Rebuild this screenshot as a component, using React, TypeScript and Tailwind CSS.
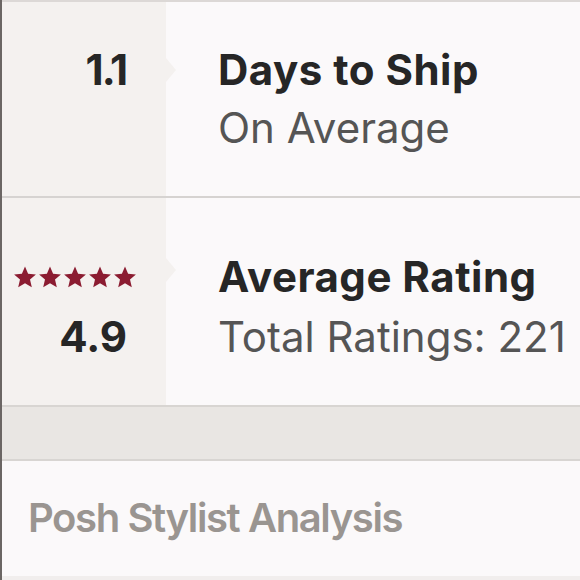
import React from "react";

const Star = () => (
  <svg width="24" height="23" viewBox="0 0 24 23" className="shrink-0">
    <path d="M12 0.6l3.1 7.2 7.8.7-5.9 5.1 1.8 7.7L12 17.3 5.2 21.3 7 13.6 1.1 8.5l7.8-.7z" fill="#8b1c31" />
  </svg>
);

const Arrow = ({ top }: { top: number }) => (
  <div
    className="absolute left-full w-0 h-0 border-y-[12px] border-y-transparent border-l-[10px] border-l-[#f4f1ef]"
    style={{ top }}
  />
);

export default function App() {
  return (
    <div
      className="w-[580px] h-[580px] overflow-hidden bg-[#fbf9fa] border-l-2 border-[#6b6664] flex flex-col"
      style={{ fontFamily: "Inter, 'Open Sans', sans-serif" }}
    >
      <div className="h-[2px] bg-[#dcd8d6]" />
      {/* Row 1 */}
      <div className="flex h-[194px]">
        <div className="relative w-[164px] bg-[#f4f1ef] flex flex-col items-end pr-[38px] pt-[44px]">
          <div className="text-[42px] font-bold text-[#262626] leading-[48px] tracking-[-2px] mr-[2px]">1.1</div>
          <Arrow top={56} />
        </div>
        <div className="flex flex-col pl-[52px] pt-[44px]">
          <div className="text-[42px] font-bold text-[#262626] leading-[48px] tracking-[0.5px]">Days to Ship</div>
          <div className="text-[42px] text-[#555] leading-[48px] mt-[10px]">On Average</div>
        </div>
      </div>
      <div className="h-[2px] bg-[#d6d3d1]" />
      {/* Row 2 */}
      <div className="flex h-[207px]">
        <div className="relative w-[164px] bg-[#f4f1ef] flex flex-col pt-[68px]">
          <div className="flex gap-[1px] pl-[11px] h-[23px] items-center">
            <Star />
            <Star />
            <Star />
            <Star />
            <Star />
          </div>
          <div className="self-end pr-[39px] mt-[24px] text-[42px] font-bold text-[#262626] leading-[48px]">4.9</div>
          <Arrow top={60} />
        </div>
        <div className="flex flex-col pl-[52px] pt-[55px]">
          <div className="text-[42px] font-bold text-[#262626] leading-[48px] tracking-[0.5px]">Average Rating</div>
          <div className="text-[42px] text-[#555] leading-[48px] mt-[12px]">Total Ratings: 221</div>
        </div>
      </div>
      {/* Gray band */}
      <div className="h-[56px] bg-[#e9e6e3] border-y-2 border-[#d8d5d2]" />
      {/* Section */}
      <div className="h-[115px] pl-[26px] pt-[33px]">
        <div className="text-[40px] font-semibold text-[#9a9591] leading-[48px] tracking-[-1.4px]">Posh Stylist Analysis</div>
      </div>
      <div className="flex-1 bg-[#f1eeed]" />
    </div>
  );
}
